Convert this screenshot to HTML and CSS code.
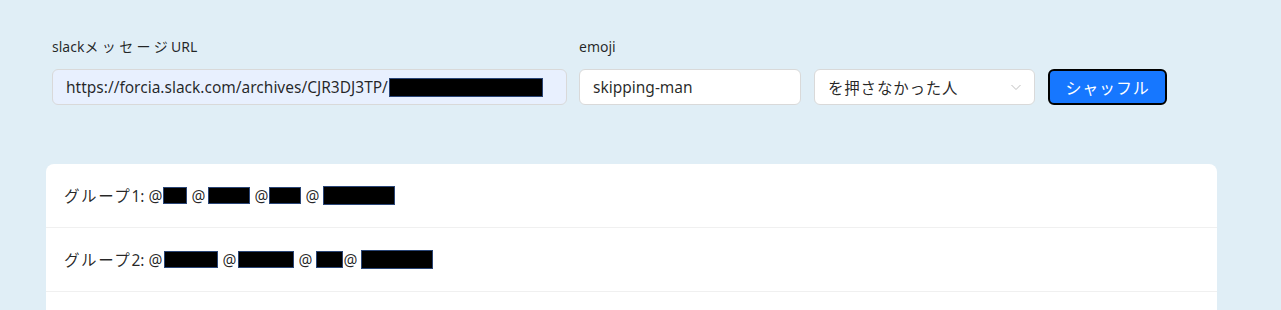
FILE: index.html
```html
<!DOCTYPE html>
<html lang="ja">
<head>
  <meta charset="UTF-8">
  <meta name="viewport" content="width=device-width, initial-scale=1.0">
  <title>slack shuffle</title>
  <link rel="stylesheet" href="styles.css">
</head>
<body>
  <div class="page">
    <form class="form">
      <div class="field field-url">
        <label for="url">slack<span class="ja">メッセージ</span>URL</label>
        <div class="input input-filled">
          <span>https://forcia.slack.com/archives/CJR3DJ3TP/</span><span class="redact r-url"></span>
        </div>
      </div>
      <div class="field field-emoji">
        <label for="emoji">emoji</label>
        <div class="input">skipping-man</div>
      </div>
      <div class="field field-select">
        <label>&nbsp;</label>
        <div class="input select">
          <span class="ja">を押さなかった人</span>
          <svg class="chevron" width="12" height="12" viewBox="0 0 12 12"><path d="M1.5 4 L6 8.5 L10.5 4" fill="none" stroke="#bfbfbf" stroke-width="1"/></svg>
        </div>
      </div>
      <div class="field field-button">
        <label>&nbsp;</label>
        <button type="button" class="shuffle">シャッフル</button>
      </div>
    </form>

    <ul class="groups">
      <li><span class="ja">グループ</span>1: @<span class="redact w23 ml1"></span> @<span class="redact w42 ml3"></span> @<span class="redact w32 ml1"></span> @<span class="redact w72 ml4 low"></span></li>
      <li><span class="ja">グループ</span>2: @<span class="redact w54 ml2"></span> @<span class="redact w56 ml2"></span> @<span class="redact w27 ml4"></span>@<span class="redact w72 ml4 low"></span></li>
      <li></li>
    </ul>
  </div>
</body>
</html>
```

FILE: styles.css
```css
body {
  margin: 0;
  background-color: #e0eef6;
  font-family: "Segoe UI", "Noto Sans", "Noto Sans CJK JP", sans-serif;
  font-size: 14px;
  color: rgba(0, 0, 0, 0.85);
}

.page {
  padding: 36px 0 0 46px;
}

.form {
  display: flex;
  align-items: flex-end;
  padding-left: 6px;
}

.field label {
  display: block;
  line-height: 22px;
  margin-bottom: 11px;
}

.field label .ja {
  letter-spacing: 3.4px;
}

.field-url {
  width: 515px;
  margin-right: 12px;
}

.field-emoji {
  width: 222px;
  margin-right: 13px;
}

.field-select {
  width: 221px;
  margin-right: 13px;
}

.input {
  box-sizing: border-box;
  height: 36px;
  display: flex;
  align-items: center;
  padding: 0 13px;
  background: #fff;
  border: 1px solid #d9d9d9;
  border-radius: 6px;
  font-size: 15.5px;
  white-space: nowrap;
  overflow: hidden;
}

.input-filled {
  background: #e8f0fe;
}

.select {
  justify-content: space-between;
  padding-right: 12px;
}

.select .ja {
  letter-spacing: 0.8px;
}

.chevron {
  display: block;
}

.shuffle {
  box-sizing: border-box;
  width: 119px;
  height: 36px;
  background: #1677ff;
  color: #fff;
  border: 2px solid #000;
  border-radius: 6px;
  font-family: inherit;
  font-size: 16px;
  letter-spacing: 0.8px;
  padding: 0;
}

.groups {
  list-style: none;
  margin: 59px 0 0;
  padding: 0;
  width: 1171px;
  background: #fff;
  border-radius: 8px 8px 0 0;
}

.groups li {
  box-sizing: border-box;
  height: 64px;
  display: flex;
  align-items: center;
  padding-left: 18px;
  border-bottom: 1px solid #f0f0f0;
  font-size: 15.5px;
  white-space: pre;
}

.groups .ja {
  letter-spacing: 1.6px;
}

.redact {
  display: inline-block;
  box-sizing: border-box;
  height: 17px;
  background: #000;
  border: 1px solid #2a4576;
  vertical-align: -4px;
}

.r-url {
  width: 154px;
  height: 19px;
  margin-left: 1px;
}

.low {
  height: 19px;
  vertical-align: -6px;
}

.w23 { width: 24px; }
.w27 { width: 27px; }
.w32 { width: 32px; }
.w42 { width: 42px; }
.w54 { width: 54px; }
.w56 { width: 56px; }
.w72 { width: 72px; }
.ml1 { margin-left: 1px; }
.ml2 { margin-left: 2px; }
.ml3 { margin-left: 3px; }
.ml4 { margin-left: 4px; }
```
